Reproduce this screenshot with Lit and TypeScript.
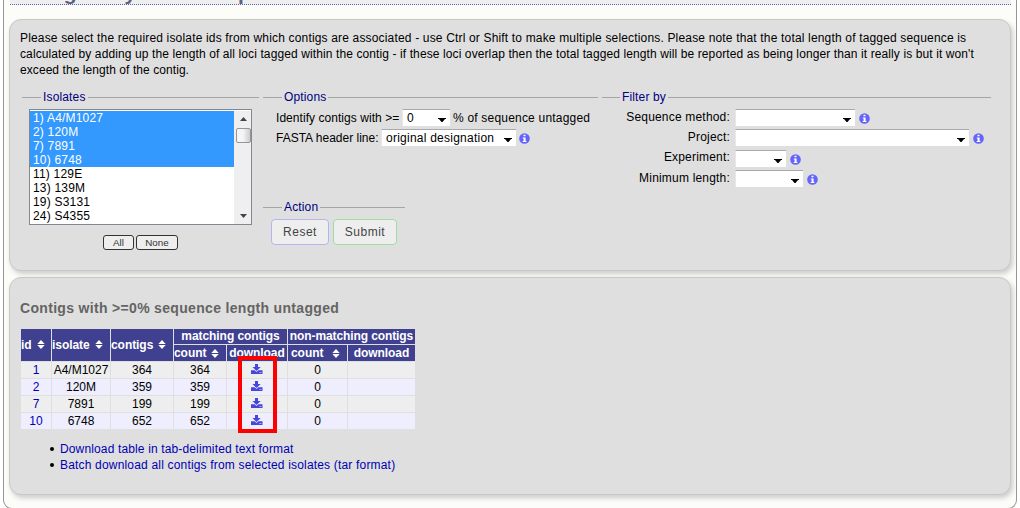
import { LitElement, html, css } from "lit";
import { customElement, property } from "lit/decorators.js";

@customElement("info-icon")
class InfoIcon extends LitElement {
  static styles = css`:host{display:block;width:11px;height:11px}svg{display:block}`;
  render() {
    return html`<svg width="11" height="11" viewBox="0 0 11 11"><circle cx="5.5" cy="5.5" r="5.3" fill="#6464fa"/><path d="M4.5 1.8h2v1.5h-2zM3.8 4.4h2.8v3.5h.8v1.2H3.7V7.9h.9V5.6h-.8z" fill="#fff"/></svg>`;
  }
}

@customElement("sort-icon")
class SortIcon extends LitElement {
  static styles = css`:host{display:block;width:8px;height:9px}svg{display:block}`;
  render() {
    return html`<svg width="8" height="9" viewBox="0 0 8 9"><path d="M.3 4 4 0l3.7 4zM.3 5h7.4L4 9z" fill="#fff"/></svg>`;
  }
}

@customElement("drop-down")
class DropDown extends LitElement {
  @property() value = "";
  static styles = css`
    :host{display:flex;align-items:center;justify-content:space-between;box-sizing:border-box;height:17px;background:#fff;border-top:1px solid #a9a9ad;border-left:1px solid #e8e8ea;padding:0 4px;font-size:12px}
    .value{white-space:nowrap;letter-spacing:.24px}
    svg{display:block;margin-top:4px;flex:none}`;
  render() {
    return html`<span class="value">${this.value}</span><svg width="8" height="4" viewBox="0 0 8 4"><path d="M0 0h8v1H7L4.5 4h-1L1 1H0z" fill="#000"/></svg>`;
  }
}

@customElement("app-root")
class AppRoot extends LitElement {
  static styles = css`
    :host{display:block;height:508px;overflow:hidden;background:#fff;font:12px/16px "Liberation Sans",Arial,sans-serif;color:#000}
    *{box-sizing:border-box}
    .page{margin-left:3px;width:1014px;height:509px;background:#fcfdf8;border:1px solid #969696;border-top:0;border-radius:0 0 9px 9px;padding:0 5px}
    .title{width:1001px;height:5px;overflow:hidden;background:#eee;border-bottom:1px dotted #6464b4;color:#606080;font-size:21px;font-weight:bold;display:flex;align-items:flex-end;padding-left:0;margin:0 0 14px 1px}
    .title span{line-height:24px;height:24px;margin-bottom:-1px;white-space:nowrap;letter-spacing:.02px}
    .panel{width:1002px;background:#dfdfdf;border:1px solid #c8c8c8;border-radius:12px;box-shadow:2px 3px 5px #ccc}
    .query{height:252px;padding:10px 18px 0 10px;margin-bottom:6px}
    .results{height:218px;padding:22px 10px 0}
    .intro{white-space:nowrap;height:48px}
    .i1{letter-spacing:.168px}.i2{letter-spacing:.105px}.i3{letter-spacing:.07px}
    .cols{display:flex;padding-left:2px;margin-top:11px}
    .legend{display:flex;align-items:center;gap:2px;height:16px;color:#000080;letter-spacing:.15px}
    .legend::before,.legend::after{content:"";height:1px;background:#a5a5a5;width:19px}
    .legend::after{flex:1}
    .filter .legend::before{width:18px}
    .iso{width:237px;margin-right:4px}
    .mid{width:335px;margin-right:4px}
    .filter{width:389px}
    .list{margin:4px 0 0 7px;width:223px;height:116px;border:1px solid #828790;background:#fff;display:flex;padding:1px 0 0}
    .options{width:204px;line-height:14px}
    .option{height:14px;padding-left:3px;letter-spacing:.2px;font-size:12px}
    .sel{background:#3399ff;color:#fff}
    .bar{width:17px;background:#efefef;display:flex;flex-direction:column;justify-content:space-between;align-items:center;padding:6px 0 6px 1px}
    .bar svg{display:block}
    .thumb{width:15px;height:15px;border:1px solid #959595;border-radius:2px;background:linear-gradient(90deg,#f5f5f5 45%,#ccc);margin-top:7px}
    .down{margin-top:auto}
    .mini{display:flex;gap:2px;margin:10px 0 0 81px}
    .mini span{height:15px;border:1px solid #333;border-radius:3px;background:#eee;color:#333;font-size:9.8px;line-height:13px;text-align:center}
    .all{width:31px}.none{width:42px}
    .row{display:flex;align-items:center;height:17px}
    .options-box{padding:4px 0 0 13px}
    .options-box .row{margin-bottom:3px}
    .id-label{width:126px;white-space:nowrap;letter-spacing:.05px}
    .fa-label{width:105px;white-space:nowrap}
    .pct{margin-left:3px;white-space:nowrap;letter-spacing:.2px}
    .w-pct{width:48px}.w-fasta{width:135px}
    info-icon{margin-left:3px;margin-top:2px}
    .filters info-icon{margin-left:4px}
    .action{width:142px;margin-top:53px}
    .buttons{display:flex;gap:4px;padding:4px 0 0 8px}
    .btn{height:26px;border:1px solid #b4b4f0;border-radius:4px;background:#eee;color:#444;text-align:center;line-height:24px;font-size:12px;letter-spacing:.5px}
    .reset{width:58px}.submit{width:64px;border-color:#a0dca0}
    .filters{padding-top:4px}
    .filters .row{margin-bottom:3.4px}
    .flabel{width:128px;text-align:right;margin-right:5px;letter-spacing:.19px;padding-bottom:2px}
    .f0{width:120px}.f1{width:234px}.f2{width:51px}.f3{width:68px}
    h2{margin:0 0 13px;font-size:14px;line-height:16px;color:#646464;letter-spacing:.32px}
    .table{position:relative;width:394px;margin-left:1px;display:grid;grid-template-columns:30px 58px 62px 52px 60px 59px 67px;grid-template-rows:15px 16px repeat(4,16px);gap:1px}
    .th{background:#404090;color:#fff;font-weight:bold;display:flex;align-items:center;justify-content:center;white-space:nowrap;overflow:hidden;letter-spacing:-.06px}
    .sort{justify-content:flex-start}
    .sort sort-icon{margin-left:5px;flex:none}
    .tall{grid-row:span 2}.wide{grid-column:span 2;line-height:14px;padding-bottom:2px}
    .tall sort-icon{margin-bottom:1px}
    .wide.non{letter-spacing:-.1px}
    .nm{padding-left:3px}.nm sort-icon{margin-left:9px}
    .td{background:#eee;text-align:center;line-height:16px;white-space:nowrap;display:flex;align-items:center;justify-content:center}
    .alt{background:#eeeeff}
    .link{color:#0000b4}
    .td svg{display:block;margin-bottom:2px}
    .mark{position:absolute;left:217px;top:27px;width:39px;height:77px;border:4px solid #f00}
    ul{list-style:none;margin:12px 0 0 30px;padding:0}
    li{display:flex;align-items:center;gap:6px;color:#0000b4;white-space:nowrap}
    li::before{content:"";width:4px;height:4px;border-radius:50%;background:#000}
    .l1{letter-spacing:.14px}.l2{letter-spacing:.18px}`;

  isolates = ["1) A4/M1027", "2) 120M", "7) 7891", "10) 6748", "11) 129E", "13) 139M", "19) S3131", "24) S4355"];
  filters = ["Sequence method:", "Project:", "Experiment:", "Minimum length:"];
  rows = [["1", "A4/M1027", "364"], ["2", "120M", "359"], ["7", "7891", "199"], ["10", "6748", "652"]];

  download() {
    return html`<svg width="12" height="10" viewBox="0 0 12 10"><path d="M4 0h3v3h2.7L5.5 7 1.5 3H4z" fill="#4646dc"/><path d="M0 6.3h3.6L5.5 8l1.9-1.7h4.1V10H0z" fill="#4646dc"/><path d="M8.3 8h2.2v.8H8.3z" fill="#bcbcf5"/></svg>`;
  }

  render() {
    return html`<div class="page">
      <div class="title"><span>Contig analysis and export</span></div>
      <section class="panel query">
        <div class="intro">
          <div class="i1">Please select the required isolate ids from which contigs are associated - use Ctrl or Shift to make multiple selections. Please note that the total length of tagged sequence is</div>
          <div class="i2">calculated by adding up the length of all loci tagged within the contig - if these loci overlap then the total tagged length will be reported as being longer than it really is but it won't</div>
          <div class="i3">exceed the length of the contig.</div>
        </div>
        <div class="cols">
          <div class="iso">
            <div class="legend">Isolates</div>
            <div class="list">
              <div class="options">${this.isolates.map((s, i) => html`<div class="option ${i < 4 ? "sel" : ""}">${s}</div>`)}</div>
              <div class="bar">
                <svg width="7" height="4" viewBox="0 0 7 4"><path d="M0 4 3.5 0 7 4z" fill="#444"/></svg>
                <div class="thumb"></div>
                <svg class="down" width="7" height="4" viewBox="0 0 7 4"><path d="M0 0 3.5 4 7 0z" fill="#444"/></svg>
              </div>
            </div>
            <div class="mini"><span class="all">All</span><span class="none">None</span></div>
          </div>
          <div class="mid">
            <div class="legend">Options</div>
            <div class="options-box">
              <div class="row"><span class="id-label">Identify contigs with &gt;=</span><drop-down class="w-pct" value="0"></drop-down><span class="pct">% of sequence untagged</span></div>
              <div class="row"><span class="fa-label">FASTA header line:</span><drop-down class="w-fasta" value="original designation"></drop-down><info-icon></info-icon></div>
            </div>
            <div class="action">
              <div class="legend">Action</div>
              <div class="buttons"><span class="btn reset">Reset</span><span class="btn submit">Submit</span></div>
            </div>
          </div>
          <div class="filter">
            <div class="legend">Filter by</div>
            <div class="filters">${this.filters.map((f, i) => html`<div class="row"><span class="flabel">${f}</span><drop-down class="f${i}"></drop-down><info-icon></info-icon></div>`)}</div>
          </div>
        </div>
      </section>
      <section class="panel results">
        <h2>Contigs with &gt;=0% sequence length untagged</h2>
        <div class="table">
          <div class="th sort tall">id<sort-icon></sort-icon></div>
          <div class="th sort tall">isolate<sort-icon></sort-icon></div>
          <div class="th sort tall">contigs<sort-icon></sort-icon></div>
          <div class="th wide">matching contigs</div>
          <div class="th wide non">non-matching contigs</div>
          <div class="th sort">count<sort-icon></sort-icon></div>
          <div class="th">download</div>
          <div class="th sort nm">count<sort-icon></sort-icon></div>
          <div class="th">download</div>
          ${this.rows.map((r, i) => {
            const c = i % 2 ? "td alt" : "td";
            return html`<div class="${c} link">${r[0]}</div><div class=${c}>${r[1]}</div><div class=${c}>${r[2]}</div><div class=${c}>${r[2]}</div><div class=${c}>${this.download()}</div><div class=${c}>0</div><div class=${c}></div>`;
          })}
          <div class="mark"></div>
        </div>
        <ul><li class="l1">Download table in tab-delimited text format</li><li class="l2">Batch download all contigs from selected isolates (tar format)</li></ul>
      </section>
    </div>`;
  }
}
